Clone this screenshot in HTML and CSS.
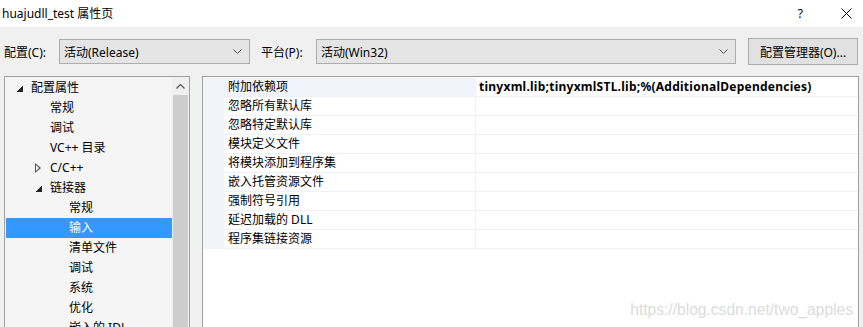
FILE: index.html
```html
<!DOCTYPE html>
<html lang="zh-CN">
<head>
    <meta charset="UTF-8">
    <title>huajudll_test 属性页</title>
    <link rel="stylesheet" href="styles.css">
</head>
<body>

<div class="titlebar">
    <span class="title">huajudll_test 属性页</span>
    <div class="title-buttons">
        <span class="help">?</span>
        <svg class="close" width="11" height="11" viewBox="0 0 11 11">
            <path d="M0.5 0.5 L10.5 10.5 M10.5 0.5 L0.5 10.5" stroke="#000" stroke-width="1" fill="none"/>
        </svg>
    </div>
</div>

<div class="toolbar">
    <label class="lbl">配置(C):</label>
    <div class="combo combo-config">
        <span>活动(Release)</span>
        <svg width="9" height="5" viewBox="0 0 9 5"><polyline points="0.5,0.5 4.5,4.5 8.5,0.5" stroke="#555" fill="none"/></svg>
    </div>
    <label class="lbl lbl-platform">平台(P):</label>
    <div class="combo combo-platform">
        <span>活动(Win32)</span>
        <svg width="9" height="5" viewBox="0 0 9 5"><polyline points="0.5,0.5 4.5,4.5 8.5,0.5" stroke="#555" fill="none"/></svg>
    </div>
    <button class="btn">配置管理器(O)...</button>
</div>

<div class="main">
    <div class="tree">
        <ul class="tree-list">
            <li class="lvl0"><span class="arrow open"></span>配置属性</li>
            <li class="lvl1">常规</li>
            <li class="lvl1">调试</li>
            <li class="lvl1">VC++ 目录</li>
            <li class="lvl1"><span class="arrow closed"></span>C/C++</li>
            <li class="lvl1"><span class="arrow open"></span>链接器</li>
            <li class="lvl2">常规</li>
            <li class="lvl2 selected">输入</li>
            <li class="lvl2">清单文件</li>
            <li class="lvl2">调试</li>
            <li class="lvl2">系统</li>
            <li class="lvl2">优化</li>
            <li class="lvl2">嵌入的 IDL</li>
        </ul>
        <div class="scrollbar">
            <div class="scroll-up">
                <svg width="9" height="5" viewBox="0 0 9 5"><polyline points="0.5,4.5 4.5,0.5 8.5,4.5" stroke="#606060" stroke-width="1.4" fill="none"/></svg>
            </div>
            <div class="thumb"></div>
        </div>
    </div>

    <div class="props">
        <div class="grid">
            <div class="row current"><div class="margin"></div><div class="name">附加依赖项</div><div class="value">tinyxml.lib;tinyxmlSTL.lib;%(AdditionalDependencies)</div></div>
            <div class="row"><div class="margin"></div><div class="name">忽略所有默认库</div><div class="value"></div></div>
            <div class="row"><div class="margin"></div><div class="name">忽略特定默认库</div><div class="value"></div></div>
            <div class="row"><div class="margin"></div><div class="name">模块定义文件</div><div class="value"></div></div>
            <div class="row"><div class="margin"></div><div class="name">将模块添加到程序集</div><div class="value"></div></div>
            <div class="row"><div class="margin"></div><div class="name">嵌入托管资源文件</div><div class="value"></div></div>
            <div class="row"><div class="margin"></div><div class="name">强制符号引用</div><div class="value"></div></div>
            <div class="row"><div class="margin"></div><div class="name">延迟加载的 DLL</div><div class="value"></div></div>
            <div class="row"><div class="margin"></div><div class="name">程序集链接资源</div><div class="value"></div></div>
        </div>
        <div class="watermark">https://blog.csdn.net/two_apples</div>
    </div>
</div>

</body>
</html>
```

FILE: styles.css
```css
body {
    margin: 0;
    background-color: #f0f0f0;
    font-family: "Noto Sans", "Noto Sans CJK SC", sans-serif;
    font-size: 12px;
    color: #000;
    overflow: hidden;
}
.titlebar {
    height: 27px;
    background-color: #fff;
    display: flex;
    align-items: center;
    justify-content: space-between;
    padding: 0 11px 0 2px;
}
.title {
    font-size: 12px;
    position: relative;
    top: -1px;
}
.title-buttons {
    display: flex;
    align-items: center;
    gap: 38px;
}
.help {
    font-size: 12px;
}
.toolbar {
    height: 49px;
    display: flex;
    align-items: center;
    padding: 0 0 0 4px;
}
.lbl {
    width: 55px;
}
.lbl-platform {
    margin-left: 11px;
}
.combo {
    height: 25px;
    box-sizing: border-box;
    border: 1px solid #adadad;
    background-color: #e5e5e5;
    display: flex;
    align-items: center;
    justify-content: space-between;
    padding: 0 7px 0 4px;
}
.combo-config {
    width: 191px;
}
.combo-platform {
    width: 420px;
}
.btn {
    margin-left: 12px;
    width: 110px;
    height: 27px;
    border: 1px solid #adadad;
    background-color: #e1e1e1;
    font-family: inherit;
    font-size: 12px;
    padding: 0;
}
.main {
    display: flex;
    padding-left: 4px;
    gap: 12px;
}
.tree {
    width: 186px;
    height: 260px;
    box-sizing: border-box;
    border: 1px solid #a0a0a0;
    border-bottom: none;
    background-color: #f5f5f5;
    display: flex;
}
.tree-list {
    list-style: none;
    margin: 0;
    padding: 1px 0 0 1px;
    flex: 1;
}
.tree-list li {
    height: 20px;
    line-height: 20px;
    position: relative;
    white-space: nowrap;
}
.lvl0 { padding-left: 25px; }
.lvl1 { padding-left: 44px; }
.lvl2 { padding-left: 63px; }
.selected {
    background-color: #3399ff;
    color: #fff;
}
.arrow {
    position: absolute;
    top: 7px;
    width: 7px;
    height: 7px;
}
.lvl0 .arrow { left: 10px; }
.lvl1 .arrow { left: 29px; }
.arrow.open {
    background: linear-gradient(to bottom right, transparent 50%, #262626 50%);
}
.arrow.closed {
    top: 5px;
    width: 0;
    height: 0;
    border-top: 5px solid transparent;
    border-bottom: 5px solid transparent;
    border-left: 6px solid #555;
}
.arrow.closed::after {
    content: "";
    position: absolute;
    left: -5px;
    top: -3px;
    border-top: 3px solid transparent;
    border-bottom: 3px solid transparent;
    border-left: 3px solid #f5f5f5;
}
.scrollbar {
    width: 17px;
    background-color: #f0f0f0;
    display: flex;
    flex-direction: column;
}
.scroll-up {
    height: 18px;
    display: flex;
    align-items: center;
    justify-content: center;
}
.thumb {
    flex: 1;
    margin: 0 1px 0 1px;
    background-color: #cdcdcd;
}
.props {
    width: 657px;
    height: 260px;
    box-sizing: border-box;
    border: 1px solid #a0a0a0;
    border-bottom: none;
    background-color: #fff;
    position: relative;
    padding-top: 1px;
}
.row {
    display: flex;
    height: 19px;
}
.margin {
    width: 21px;
    background-color: #f0f4fa;
}
.name {
    width: 252px;
    box-sizing: border-box;
    padding-left: 4px;
    line-height: 18px;
    border-bottom: 1px solid #eef2f8;
    border-right: 1px solid #eef2f8;
}
.value {
    flex: 1;
    padding-left: 3px;
    line-height: 18px;
    border-bottom: 1px solid #eef2f8;
    font-weight: bold;
    letter-spacing: 0.25px;
    white-space: nowrap;
}
.current .name {
    background-color: #f0f4fa;
}
.watermark {
    position: absolute;
    right: 5px;
    top: 224px;
    font-family: "Liberation Sans", Arial, sans-serif;
    font-size: 15.6px;
    color: #dcdcdc;
}
```
